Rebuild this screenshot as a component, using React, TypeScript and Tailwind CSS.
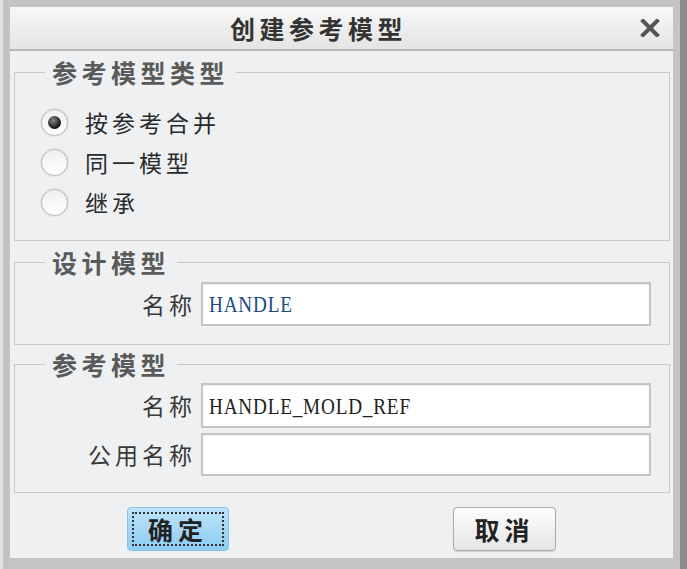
import React from 'react'

const cjk = "font-['Noto_Sans_CJK_SC','Noto_Sans',sans-serif]"
const serif = "font-['Liberation_Serif',serif]"

const Radio = ({ checked, label }: { checked?: boolean; label: string }) => (
  <div className="flex h-10 items-center">
    <span className="ml-[26px] flex h-[27px] w-[27px] items-center justify-center rounded-full border border-[#b9b9b9] bg-gradient-to-b from-[#efefef] to-white shadow-[0_0_2px_rgba(0,0,0,0.2)]">
      {checked && (
        <span className="h-[13px] w-[13px] rounded-full bg-[radial-gradient(circle_at_40%_35%,#888,#111_70%)]" />
      )}
    </span>
    <span className={`${cjk} ml-[17px] text-[23px] leading-none tracking-[4px] text-[#2a2a2a]`}>
      {label}
    </span>
  </div>
)

const Field = ({ label, value, blue, h }: { label: string; value?: string; blue?: boolean; h: string }) => (
  <div className="flex items-center">
    <div className={`${cjk} w-[181px] text-right text-[23px] leading-none tracking-[4px] text-[#383838]`}>
      {label}
    </div>
    <div
      className={`ml-[5px] flex w-[450px] items-center border-2 border-[#c4c4c4] bg-white pl-[6px] shadow-[inset_0_1px_1px_rgba(0,0,0,0.08)] ${h}`}
    >
      <span
        className={`${serif} inline-block origin-left scale-x-[0.8] whitespace-nowrap text-[24px] leading-none tracking-[1px] ${blue ? 'text-[#214b7f]' : 'text-[#222]'}`}
      >
        {value}
      </span>
    </div>
  </div>
)

const Legend = ({ children }: { children: React.ReactNode }) => (
  <legend className={`${cjk} ml-[30px] px-[7px] text-[25px] font-bold leading-[26px] tracking-[4.5px] text-[#5a5a5a]`}>
    {children}
  </legend>
)

export default function App() {
  return (
    <div className="flex h-[569px] w-[687px] bg-[#c4c4c4]">
      <div className="w-[3px] bg-[#e2e2e2]" />
      <div className="flex h-[569px] w-[677px] flex-col border-t-[7px] border-r-[7px] border-b-[11px] border-l-[7px] border-[#c4c4c4] bg-[#eef0f1]">
        <div className="flex h-[44px] shrink-0 items-center border-b-2 border-[#b8b8b8] bg-gradient-to-b from-[#f8f8f8] to-[#e4e4e4]">
          <div className={`${cjk} flex-1 text-center text-[25px] font-bold leading-none tracking-[4.5px] text-[#333]`}>
            创建参考模型
          </div>
          <div className="flex w-[46px] justify-center">
            <svg width="20" height="18" viewBox="0 0 20 18">
              <path d="M3 2 L17 16 M17 2 L3 16" stroke="#555" strokeWidth="4" strokeLinecap="square" />
            </svg>
          </div>
        </div>

        <fieldset className="mt-[8px] ml-[4px] mr-[3px] border border-[#c8c8c8] pt-[17px] pb-[18px]">
          <Legend>参考模型类型</Legend>
          <Radio checked label="按参考合并" />
          <Radio label="同一模型" />
          <Radio label="继承" />
        </fieldset>

        <fieldset className="mt-[8px] ml-[4px] mr-[3px] border border-[#c8c8c8] pt-[7px] pb-[18px]">
          <Legend>设计模型</Legend>
          <Field label="名称" value="HANDLE" blue h="h-[44px]" />
        </fieldset>

        <fieldset className="mt-[6px] ml-[4px] mr-[3px] border border-[#c8c8c8] pt-[6px] pb-[16px]">
          <Legend>参考模型</Legend>
          <div className="flex flex-col gap-[5px]">
            <Field label="名称" value="HANDLE_MOLD_REF" h="h-[45px]" />
            <Field label="公用名称" h="h-[43px]" />
          </div>
        </fieldset>

        <div className="mt-[14px] flex pl-[117px]">
          <button className="flex h-[44px] w-[102px] items-center justify-center rounded-[4px] border border-[#86c3ea] bg-gradient-to-b from-[#bfe4fa] to-[#8ccbf3] p-[4px]">
            <span className={`${cjk} flex h-full w-full items-center justify-center border-2 border-dotted border-[#333] text-[25px] font-bold leading-none tracking-[5px] text-[#222]`}>
              确定
            </span>
          </button>
          <button className={`${cjk} ml-[224px] flex h-[44px] w-[103px] items-center justify-center rounded-[4px] border border-[#aaa] bg-gradient-to-b from-white to-[#e4e4e4] text-[25px] font-bold leading-none tracking-[5px] text-[#222] shadow-[0_1px_1px_rgba(0,0,0,0.15)]`}>
            取消
          </button>
        </div>
      </div>
      <div className="w-[7px] bg-[#8c8c8c]" />
    </div>
  )
}
